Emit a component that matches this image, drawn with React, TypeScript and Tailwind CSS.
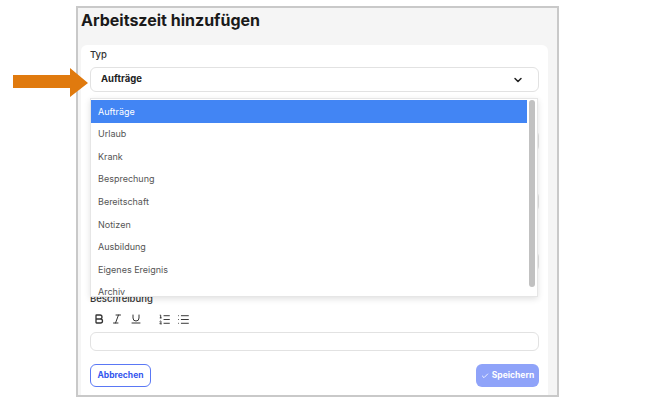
import { ChevronDown, Bold, Italic, Underline, ListOrdered, List, Check } from "lucide-react";

const types = [
  "Aufträge",
  "Urlaub",
  "Krank",
  "Besprechung",
  "Bereitschaft",
  "Notizen",
  "Ausbildung",
  "Eigenes Ereignis",
  "Archiv",
];

function Arrow() {
  return (
    <svg className="absolute left-[13px] top-[68px]" width="76" height="30" viewBox="0 0 76 30">
      <polygon points="0,7 57,7 57,0 75,15 57,29 57,20 0,20" fill="#e07a0e" />
    </svg>
  );
}

function Dropdown() {
  return (
    <div className="absolute left-0 right-[1px] top-[31px] h-[199px] bg-white border border-[#e6e6e6] shadow-[0_2px_6px_rgba(0,0,0,0.12)] flex z-10">
      <div className="flex-1 pt-[1px] overflow-hidden">
        {types.map((t, i) => (
          <div
            key={t}
            className={
              i === 0
                ? "h-[22.6px] flex items-center pl-[7px] text-[9px] bg-[#4285f4] text-white"
                : "h-[22.6px] flex items-center pl-[7px] text-[9px] text-[#555]"
            }
          >
            {t}
          </div>
        ))}
      </div>
      <div className="w-[10px] pt-[1px] pl-[2px]">
        <div className="w-[6px] h-[187px] rounded-full bg-[#c1c1c1]" />
      </div>
    </div>
  );
}

export default function App() {
  return (
    <div className="relative w-[645px] h-[401px] bg-white overflow-hidden font-['Inter',sans-serif] text-[#222]">
      <div className="ml-[76px] mt-[6px] w-[483px] h-[391px] border-2 border-[#c9c9c9] bg-[#f5f5f5] flex flex-col overflow-hidden">
        <h1 className="pl-[3px] text-[16px] leading-[24px] font-bold text-[#1a1a1a]">Arbeitszeit hinzufügen</h1>
        <div className="mt-[13px] ml-[3px] mr-[9px] flex-1 bg-white rounded-t-md px-[9px] pt-[3px] flex flex-col">
          <label className="text-[9.5px] leading-[14px] font-medium text-[#333]">Typ</label>
          <div className="relative mt-[5px]">
            <div className="h-[25px] border border-[#e2e2e2] rounded-md flex items-center justify-between pl-[10px] pr-[14px]">
              <span className="text-[9.5px] font-bold text-[#222]">Aufträge</span>
              <ChevronDown size={12} strokeWidth={3} className="text-[#222]" />
            </div>
            <Dropdown />
          </div>
          <div className="h-[200px] flex flex-col">
            <div className="mt-[38px] h-[22px] border border-[#e2e2e2] rounded-md" />
            <div className="mt-[39px] h-[21px] border border-[#e2e2e2] rounded-md" />
            <div className="mt-[39px] h-[21px] border border-[#e2e2e2] rounded-md" />
          </div>
          <label className="text-[9.5px] leading-[14px] font-medium text-[#333]">Beschreibung</label>
          <div className="mt-[5px] h-[16px] flex items-center pl-[3px] text-[#333]">
            <Bold size={12} strokeWidth={2.6} />
            <Italic size={12} strokeWidth={2} className="ml-[6px]" />
            <Underline size={12} strokeWidth={2} className="ml-[7px]" />
            <ListOrdered size={13} strokeWidth={1.8} className="ml-[16px]" />
            <List size={13} strokeWidth={1.8} className="ml-[6px]" />
          </div>
          <div className="mt-[5px] h-[19px] border border-[#e2e2e2] rounded-md" />
          <div className="mt-[13px] flex justify-between">
            <button className="h-[23px] w-[61px] rounded-md border-[1.5px] border-[#5a78f5] text-[#3557ee] text-[8.5px] font-bold">
              Abbrechen
            </button>
            <button className="h-[23px] w-[63px] rounded-md bg-[#8fa3f9] text-white text-[8.5px] font-bold flex items-center justify-center gap-[3px]">
              <Check size={8} strokeWidth={2.5} />
              Speichern
            </button>
          </div>
        </div>
      </div>
      <Arrow />
    </div>
  );
}
